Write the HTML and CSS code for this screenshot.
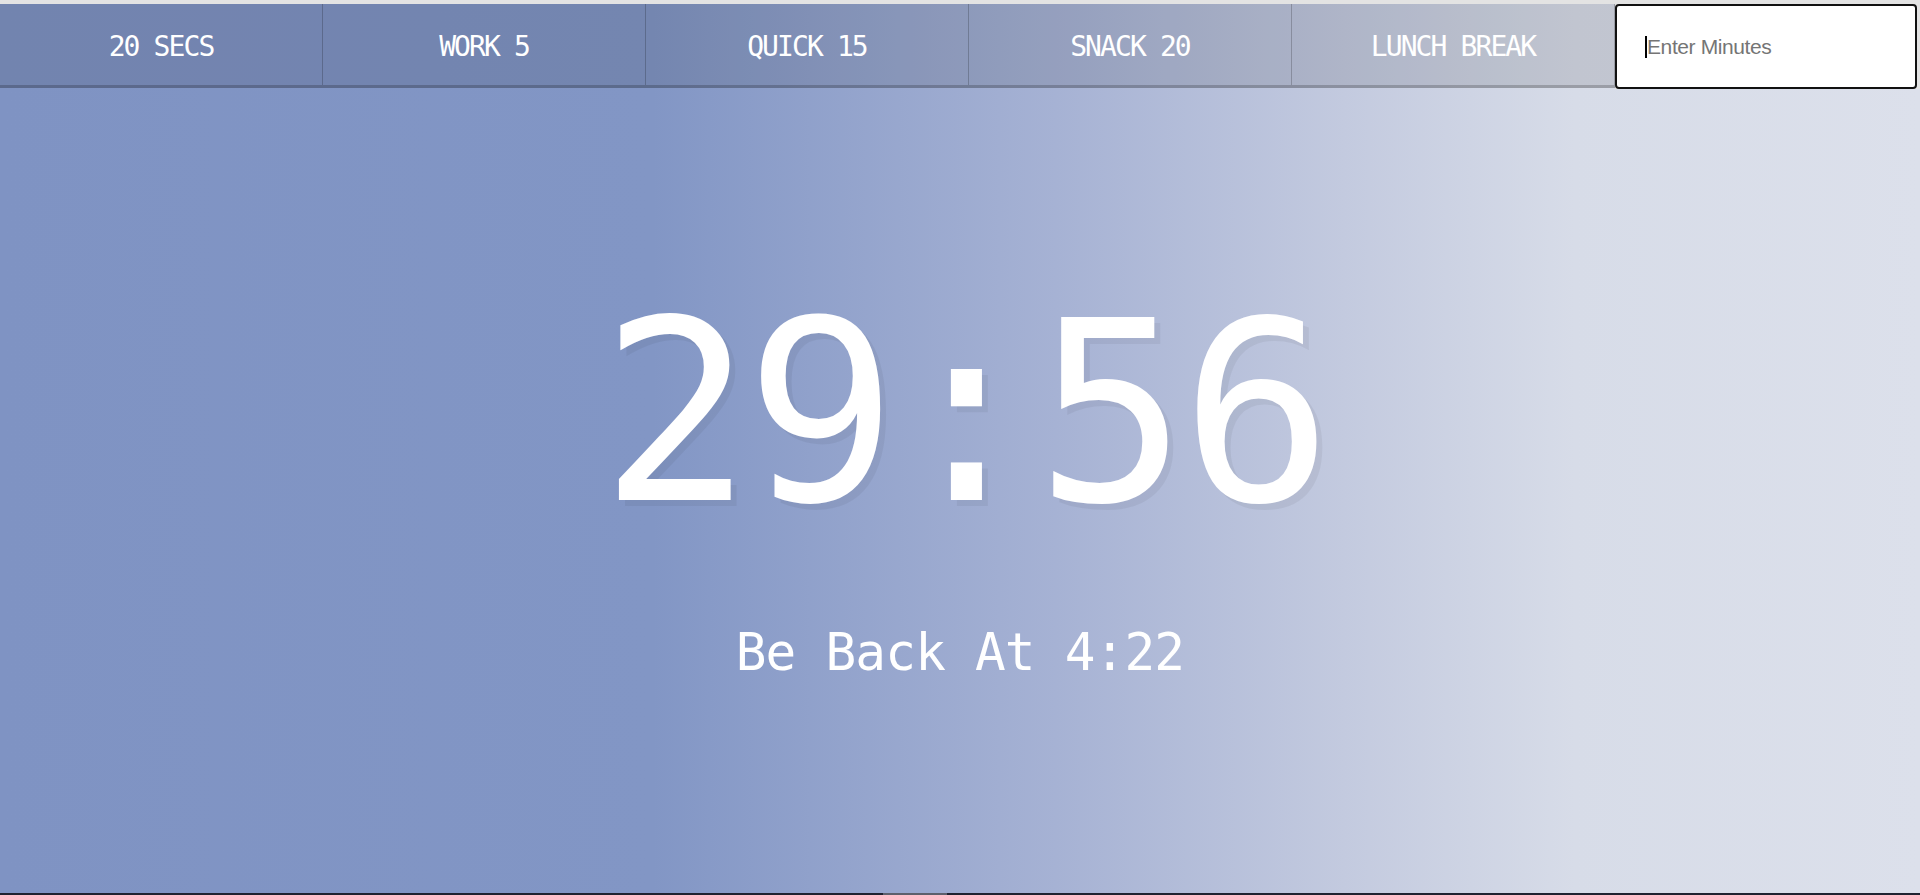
FILE: index.html
```html
<!DOCTYPE html>
<html lang="en">
<head>
<meta charset="UTF-8">
<title>Countdown Timer</title>
<link rel="stylesheet" href="styles.css">
</head>
<body>
<div class="chrome-top"></div>
<div class="timer">
  <div class="timer__controls">
    <button class="timer__button">20 Secs</button>
    <button class="timer__button">Work 5</button>
    <button class="timer__button">Quick 15</button>
    <button class="timer__button">Snack 20</button>
    <button class="timer__button">Lunch Break</button>
    <form class="timer__form">
      <div class="timer__input">
        <span class="caret"></span><span class="placeholder">Enter Minutes</span>
      </div>
    </form>
  </div>
  <div class="display">
    <h1 class="display__time-left">29:56</h1>
    <p class="display__end-time">Be Back At 4:22</p>
  </div>
</div>
<div class="chrome-bottom"><span class="chrome-bottom__thumb"></span></div>
</body>
</html>
```

FILE: styles.css
```css
html {
  box-sizing: border-box;
}
*, *::before, *::after {
  box-sizing: inherit;
}
body {
  margin: 0;
  height: 895px;
  display: flex;
  flex-direction: column;
  text-align: center;
  font-family: "DejaVu Sans Mono", monospace;
  background: #dde1ec;
  overflow: hidden;
}
.chrome-top {
  height: 4px;
  background: #e3e3e3;
  flex: none;
}
.timer {
  flex: 1;
  display: flex;
  flex-direction: column;
  background: linear-gradient(90deg, #7f93c3 0%, #8296c5 34%, #a6b2d4 55%, #c3cadf 70%, #d7dce8 82%, #dce0eb 100%);
}
.timer__controls {
  display: flex;
  height: 85px;
}
.timer__button {
  flex: 1;
  margin: 0;
  border: 0;
  background: rgba(0, 0, 0, 0.1);
  border-bottom: 3px solid rgba(0, 0, 0, 0.2);
  border-right: 1px solid rgba(0, 0, 0, 0.2);
  color: #fff;
  font-family: "DejaVu Sans Mono", monospace;
  font-size: 28px;
  letter-spacing: -1.9px;
  text-transform: uppercase;
  padding: 4px 0 0;
  height: 84px;
}
.timer__form {
  flex: none;
  width: 305px;
  display: flex;
  padding-right: 3px;
  background: #e3e3e3;
}
.timer__input {
  flex: 1;
  background: #fff;
  border: 2px solid #111;
  border-radius: 4px;
  display: flex;
  align-items: center;
  padding-left: 28px;
  font-family: "Liberation Sans", Arial, sans-serif;
  font-size: 21px;
  letter-spacing: -0.4px;
  color: #757575;
  text-align: left;
}
.caret {
  width: 2px;
  height: 22px;
  background: #000;
}
.display {
  flex: 1;
  display: flex;
  flex-direction: column;
  align-items: center;
  justify-content: center;
}
.display__time-left {
  margin: 0;
  font-weight: normal;
  font-size: 252px;
  line-height: 1;
  letter-spacing: -6.5px;
  padding-left: 6.5px;
  color: #fff;
  text-shadow: 6px 6px 0 rgba(0, 0, 0, 0.05);
}
.display__end-time {
  margin: 88px 0 18px;
  font-size: 51px;
  line-height: 1;
  letter-spacing: -0.8px;
  color: #fff;
}
.chrome-bottom {
  flex: none;
  height: 2px;
  background: #1f2230;
  position: relative;
}
.chrome-bottom__thumb {
  position: absolute;
  left: 883px;
  width: 64px;
  top: 0;
  bottom: 0;
  background: #5d606c;
}
```
